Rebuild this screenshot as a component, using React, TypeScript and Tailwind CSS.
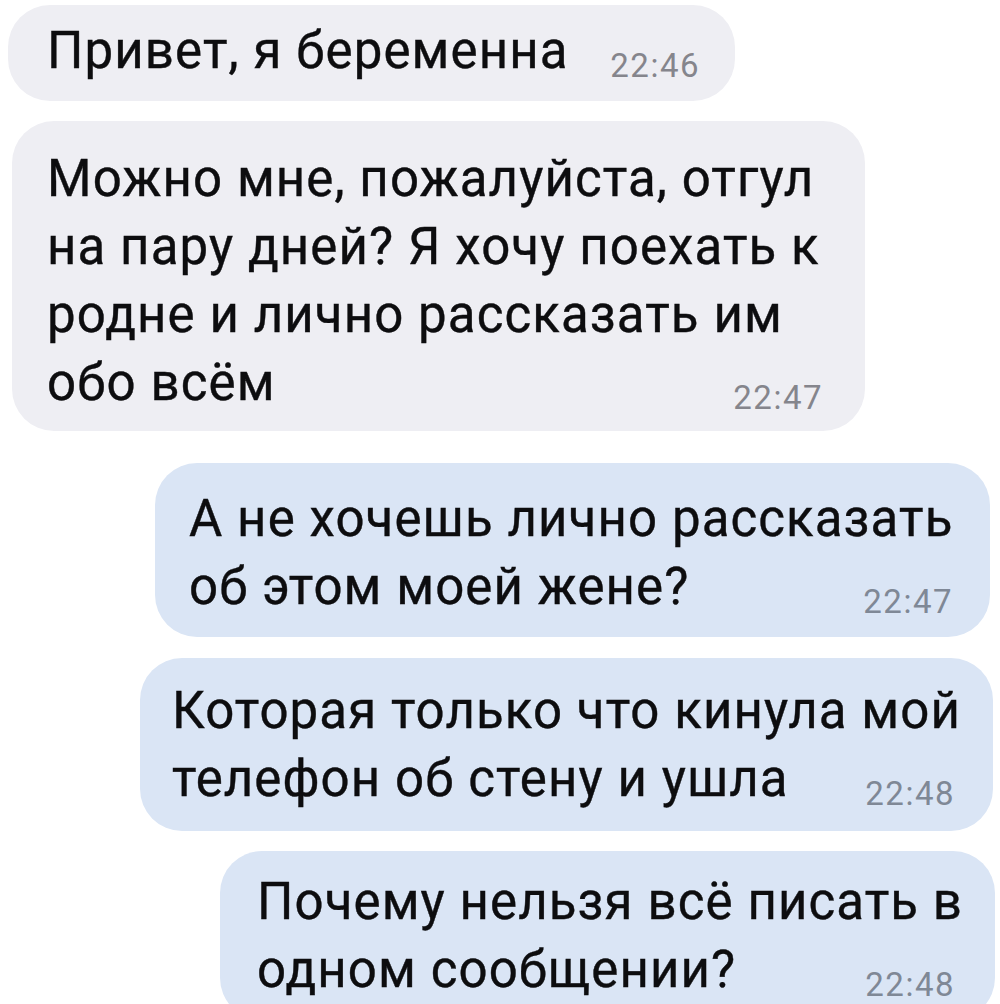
const FONT = { fontFamily: "Roboto, 'Noto Sans', sans-serif" }

type Msg = {
  lines: string[]
  time: string
  mine: boolean
  box: string
}

const MESSAGES: Msg[] = [
  {
    lines: ['Привет, я беременна'],
    time: '22:46',
    mine: false,
    box: 'ml-[8px] w-[727px] pt-[12px] pb-[16px] pl-[39px] pr-[35px]',
  },
  {
    lines: ['Можно мне, пожалуйста, отгул', 'на пару дней? Я хочу поехать к', 'родне и лично рассказать им', 'обо всём'],
    time: '22:47',
    mine: false,
    box: 'ml-[12px] mt-[20px] w-[853px] pt-[24px] pb-[14px] pl-[35px] pr-[42px]',
  },
  {
    lines: ['А не хочешь лично рассказать', 'об этом моей жене?'],
    time: '22:47',
    mine: true,
    box: 'ml-[155px] mt-[32px] w-[835px] pt-[22px] pb-[16px] pl-[34px] pr-[37px]',
  },
  {
    lines: ['Которая только что кинула мой', 'телефон об стену и ушла'],
    time: '22:48',
    mine: true,
    box: 'ml-[140px] mt-[21px] w-[853px] pt-[19px] pb-[18px] pl-[32px] pr-[38px]',
  },
  {
    lines: ['Почему нельзя всё писать в', 'одном сообщении?'],
    time: '22:48',
    mine: true,
    box: 'ml-[220px] mt-[20px] w-[775px] pt-[17px] pb-[16px] pl-[37px] pr-[40px]',
  },
]

function Bubble({ msg }: { msg: Msg }) {
  const head = msg.lines.slice(0, -1)
  const last = msg.lines[msg.lines.length - 1]
  return (
    <div className={`${msg.box} rounded-[42px] ${msg.mine ? 'bg-[#dae5f5]' : 'bg-[#eeeef3]'}`}>
      {head.map((l) => (
        <div key={l} className="whitespace-nowrap text-[51px] leading-[68px] tracking-[1.1px] text-[#0d0d0f] [-webkit-text-stroke:0.4px_#0d0d0f]">{l}</div>
      ))}
      <div className="flex items-baseline justify-between">
        <span className="whitespace-nowrap text-[51px] leading-[68px] tracking-[1.1px] text-[#0d0d0f] [-webkit-text-stroke:0.4px_#0d0d0f]">{last}</span>
        <span className={`translate-y-[9px] text-[33px] leading-none tracking-[1.5px] ${msg.mine ? 'text-[#7f8896]' : 'text-[#85858c]'}`}>
          {msg.time}
        </span>
      </div>
    </div>
  )
}

export default function App() {
  return (
    <main className="w-[1000px] h-[1004px] overflow-hidden bg-white pt-[5px]" style={FONT}>
      {MESSAGES.map((m, i) => (
        <Bubble key={i} msg={m} />
      ))}
    </main>
  )
}
